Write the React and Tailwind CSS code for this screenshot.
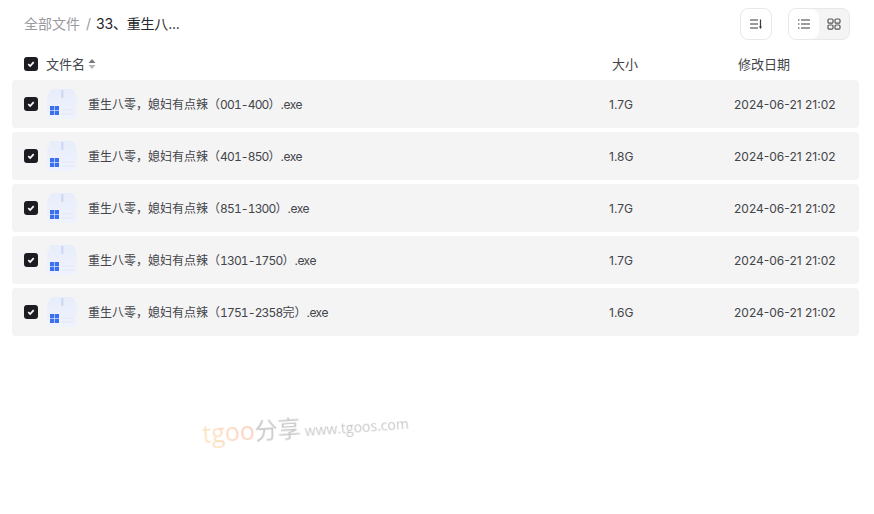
const FILES = [
  { range: "001-400", size: "1.7G" },
  { range: "401-850", size: "1.8G" },
  { range: "851-1300", size: "1.7G" },
  { range: "1301-1750", size: "1.7G" },
  { range: "1751-2358", extra: "完", size: "1.6G" },
];

function Check() {
  return (
    <span className="flex h-[14px] w-[14px] shrink-0 items-center justify-center rounded-[3px] bg-[#1c1c22]">
      <svg width="10" height="10" viewBox="0 0 10 10" fill="none">
        <path d="M2.3 5.2 4.2 7.1 7.7 3.1" stroke="#fff" strokeWidth="1.7" />
      </svg>
    </span>
  );
}

function FileIcon() {
  return (
    <svg width="30" height="30" viewBox="0 0 30 30" className="block shrink-0">
      <defs>
        <linearGradient id="box" x1="0" y1="0" x2="0" y2="1">
          <stop offset="0" stopColor="#e8edfb" />
          <stop offset="1" stopColor="#f0f3fd" />
        </linearGradient>
      </defs>
      <path d="M5 0h20a2 2 0 0 1 2 1.5L30 9v19a2 2 0 0 1-2 2H2a2 2 0 0 1-2-2V9l3-7.5A2 2 0 0 1 5 0z" fill="url(#box)" />
      <rect x="14" y="1" width="2.5" height="8" fill="#cfdaf7" />
      <rect x="15" y="20" width="12" height="2" fill="#e8ecf9" />
      <rect x="15" y="24" width="12" height="2" fill="#e8ecf9" />
      <g fill="#3a6ff0">
        <rect x="3" y="17" width="4.2" height="4.2" />
        <rect x="7.8" y="17" width="4.2" height="4.2" />
        <rect x="3" y="21.8" width="4.2" height="4.2" />
        <rect x="7.8" y="21.8" width="4.2" height="4.2" />
      </g>
    </svg>
  );
}

export default function App() {
  return (
    <div className="relative h-[514px] w-[874px] overflow-hidden bg-white font-['Inter','Noto_Sans_CJK_SC',sans-serif]">
      <div className="flex h-[48px] items-center pl-[24px] pr-[24px]">
        <div className="-mt-[1px] flex items-center text-[14px]">
          <span className="text-[#9a9a9f]">全部文件</span>
          <span className="mx-[6px] text-[#9a9a9f]">/</span>
          <span className="-ml-[1px] tracking-[-0.2px] text-[#25262b]">33、重生八...</span>
        </div>
        <div className="ml-auto flex items-center gap-[16px]">
          <button className="flex h-[32px] w-[32px] items-center justify-center rounded-[8px] border border-[#e8e8e8] bg-white">
            <svg width="14" height="14" viewBox="0 0 14 14" fill="none" stroke="#3a3a40" strokeWidth="1.2">
              <path d="M1 3h8M1 7h8M1 11h8" />
              <path d="M11.5 2.5v8" />
              <path d="M10 9.5h3L11.5 12z" fill="#3a3a40" stroke="none" />
            </svg>
          </button>
          <div className="flex h-[32px] w-[62px] overflow-hidden rounded-[8px] border border-[#e8e8e8] bg-[#f4f4f4]">
            <span className="flex w-[30px] items-center justify-center rounded-r-[8px] bg-white">
              <svg width="14" height="14" viewBox="0 0 14 14" fill="none" stroke="#3a3a40" strokeWidth="1.2">
                <path d="M4 3h9M4 7h9M4 11h9M1 3h1.5M1 7h1.5M1 11h1.5" />
              </svg>
            </span>
            <span className="flex flex-1 items-center justify-center">
              <svg width="14" height="14" viewBox="0 0 14 14" fill="none" stroke="#55555b" strokeWidth="1.2">
                <rect x="1" y="2" width="5" height="4.2" rx="1.2" />
                <rect x="8" y="2" width="5" height="4.2" rx="1.2" />
                <rect x="1" y="8" width="5" height="4.2" rx="1.2" />
                <rect x="8" y="8" width="5" height="4.2" rx="1.2" />
              </svg>
            </span>
          </div>
        </div>
      </div>

      <div className="flex h-[32px] items-center pl-[24px] text-[13px] text-[#43444a]">
        <Check />
        <span className="ml-[8px] pt-[1px]">文件名</span>
        <svg width="8" height="12" viewBox="0 0 8 12" className="ml-[3px]">
          <path d="M4 1 7.5 5h-7z" fill="#77777c" />
          <path d="M4 11 .5 7h7z" fill="#b4b4b8" />
        </svg>
        <span className="ml-[516px] w-[126px] pt-[1px]">大小</span>
        <span className="pt-[1px]">修改日期</span>
      </div>

      <div className="ml-[12px] mr-[15px] flex flex-col gap-[4px]">
        {FILES.map((f) => (
          <div key={f.range} className="flex h-[48px] items-center rounded-[4px] bg-[#f4f4f4] pl-[12px] text-[12px] text-[#43444a]">
            <Check />
            <span className="ml-[9px]"><FileIcon /></span>
            <span className="ml-[11px] w-[521px] truncate pt-[1px]">
              重生八零，媳妇有点辣（
              <span className="tabular-nums tracking-[-0.85px]">{f.range}</span>
              {f.extra}）
              <span className="tracking-[-0.5px]">.exe</span>
            </span>
            <span className="w-[125px] pt-[1px]">{f.size}</span>
            <span className="pt-[1px]">2024-06-21 21:02</span>
          </div>
        ))}
      </div>

      <div className="absolute left-[202px] top-[408px] flex -rotate-[4deg] items-baseline font-['Open_Sans','Noto_Sans_CJK_SC',sans-serif] opacity-90 blur-[0.4px]">
        <span className="bg-linear-to-r from-[#fbe3bd] to-[#fcc9b8] bg-clip-text text-[25px] text-transparent">tgoo</span>
        <span className="text-[23px] text-[#c4c4c4]">分享</span>
        <span className="ml-[4px] text-[14px] text-[#c4c4c4]">www.tgoos.com</span>
      </div>
    </div>
  );
}
